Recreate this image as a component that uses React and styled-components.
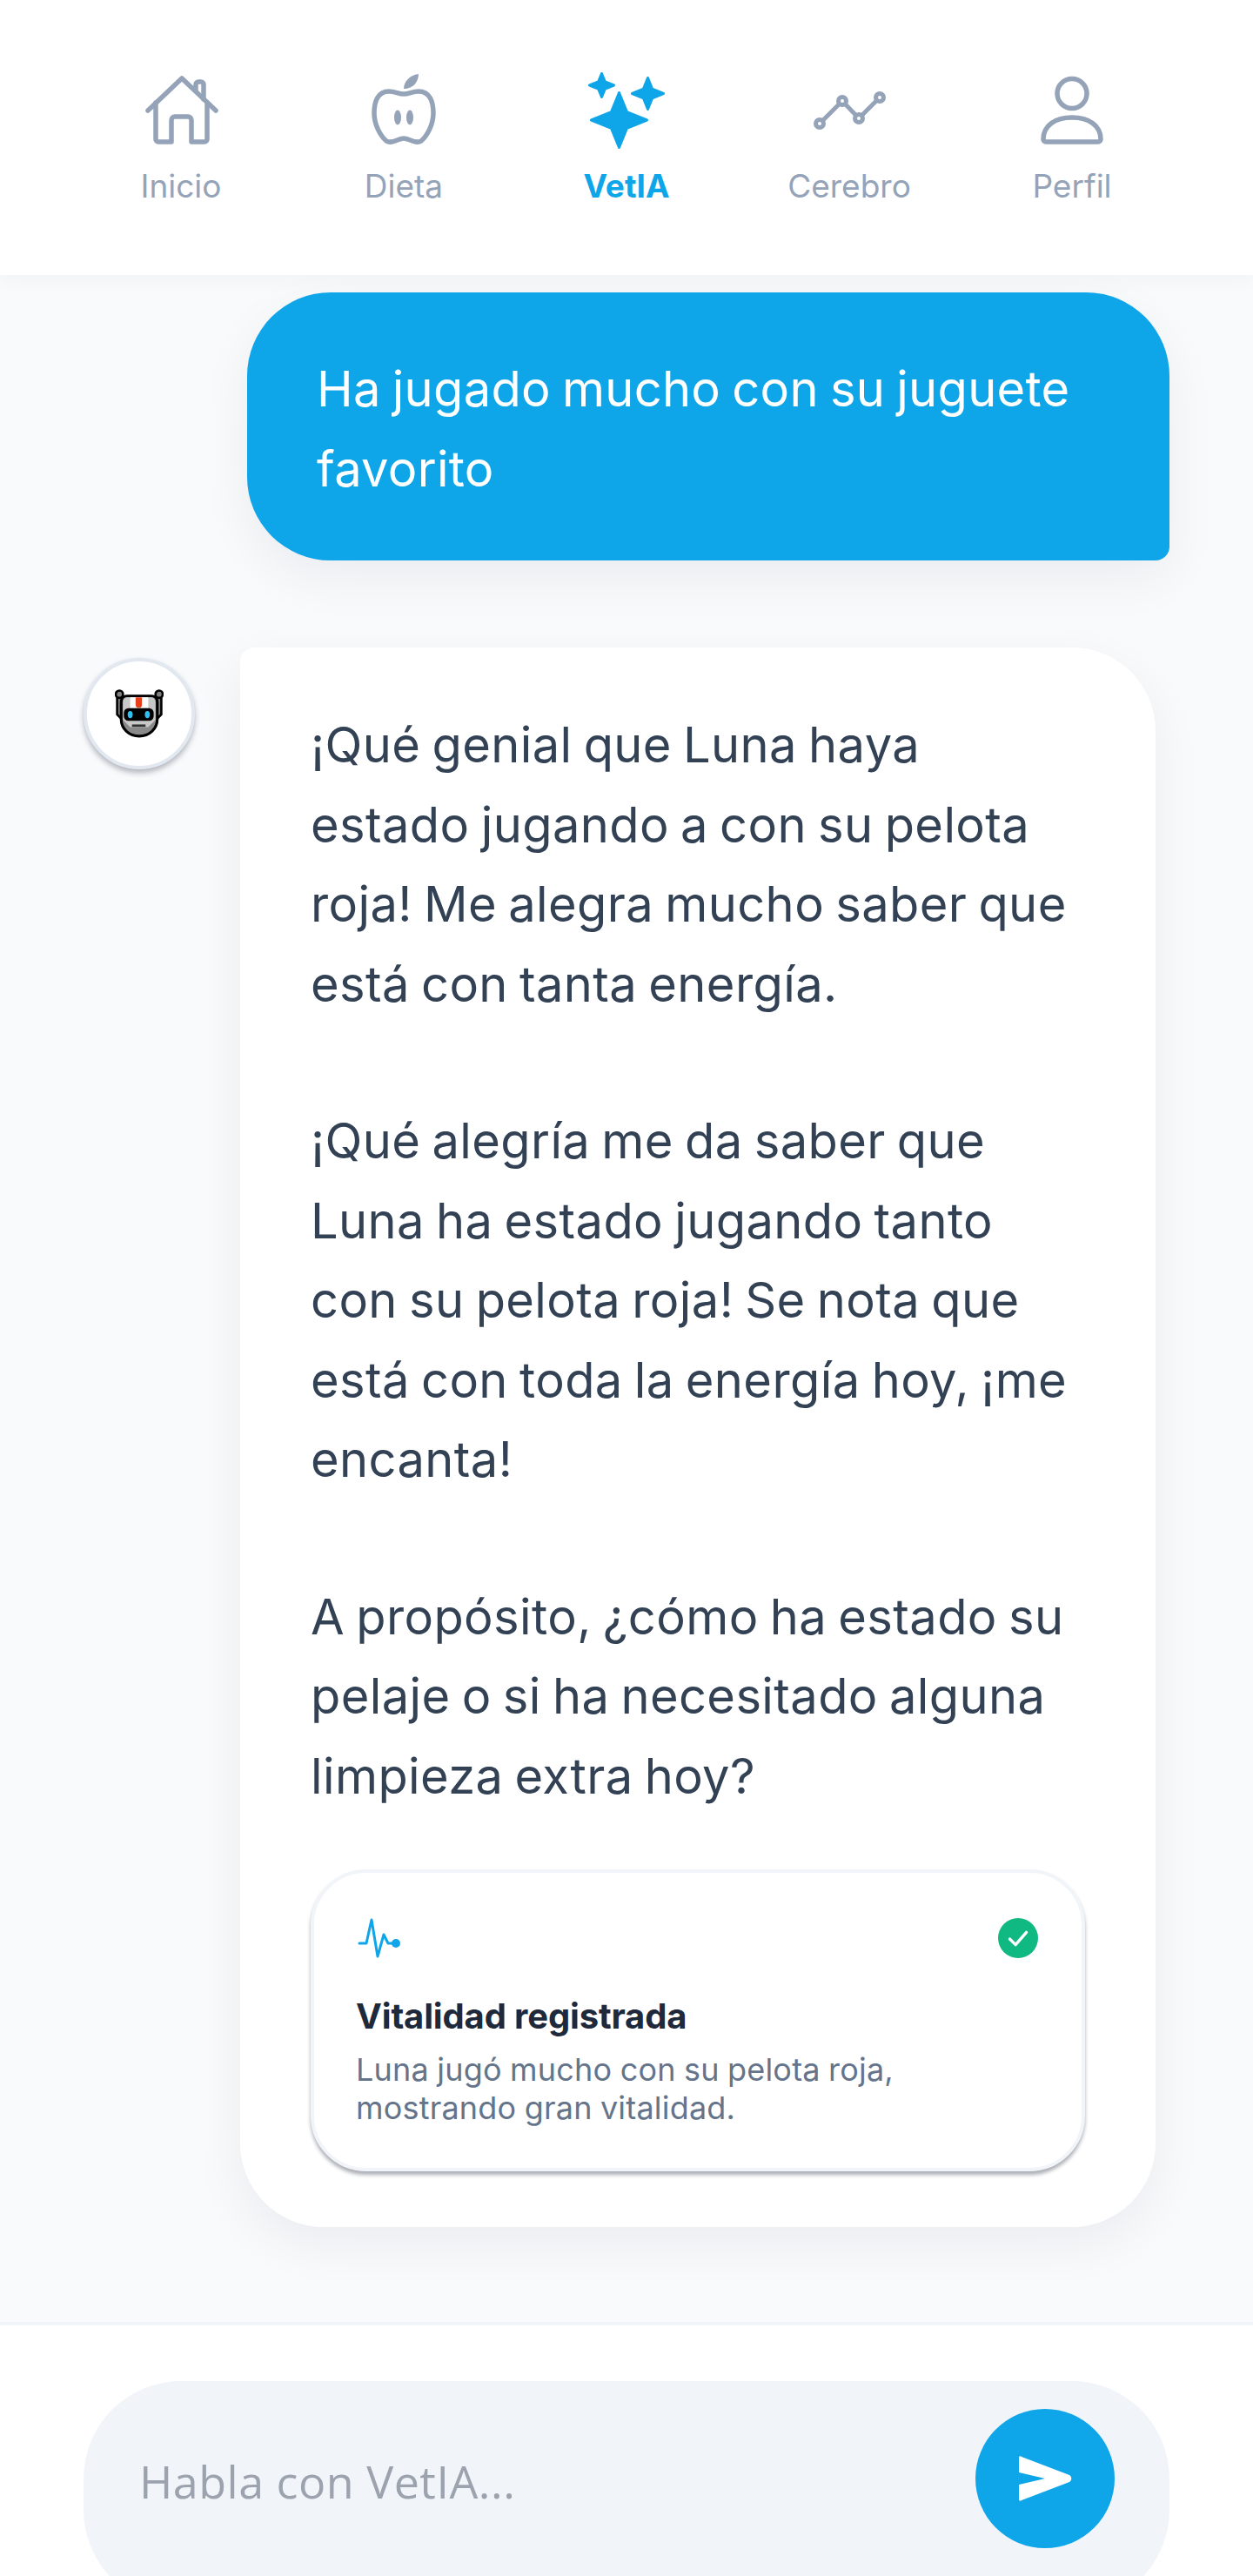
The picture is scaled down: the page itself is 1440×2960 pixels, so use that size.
import React from 'react';
import styled, { createGlobalStyle } from 'styled-components';

const Global = createGlobalStyle`
  html, body { margin: 0; padding: 0; background: #f8fafc; }
  * { box-sizing: border-box; }
`;

const Page = styled.div`
  width: 1440px;
  height: 2960px;
  display: flex;
  flex-direction: column;
  overflow: hidden;
  background: #f9fafc;
  font-family: Inter, "Liberation Sans", sans-serif;
`;

const Header = styled.header`
  height: 316px;
  flex: none;
  background: #fff;
  box-shadow: 0 4px 24px rgba(15, 23, 42, 0.04);
  display: grid;
  grid-template-columns: repeat(5, 256px);
  justify-content: center;
  padding-top: 80px;
  position: relative;
  z-index: 1;
`;

const NavItem = styled.div`
  display: flex;
  flex-direction: column;
  align-items: center;
  color: ${p => (p.$active ? '#0ea5e9' : '#94a3b8')};
`;

const NavIcon = styled.svg`
  width: 96px;
  height: 96px;
  display: block;
`;

const NavLabel = styled.span`
  margin-top: 14px;
  font-size: 37px;
  line-height: 48px;
  letter-spacing: 0;
  font-weight: ${p => (p.$active ? 700 : 400)};
`;

const Chat = styled.main`
  flex: 1;
  min-height: 0;
  padding: 20px 96px 0;
  display: flex;
  flex-direction: column;
  overflow: hidden;
`;

const UserBubble = styled.div`
  align-self: flex-end;
  width: 1060px;
  height: 308px;
  padding: 65px 80px 0;
  background: #0ea5e9;
  color: #fff;
  font-size: 56px;
  line-height: 92px;
  letter-spacing: 0.3px;
  word-spacing: -3px;
  border-radius: 96px 96px 16px 96px;
  box-shadow: 0 20px 60px rgba(15, 23, 42, 0.06);
`;

const BotRow = styled.div`
  margin-top: 100px;
  display: flex;
  align-items: flex-start;
`;

const Avatar = styled.div`
  width: 128px;
  height: 128px;
  margin-top: 12px;
  flex: none;
  border-radius: 50%;
  background: #fff;
  border: 4px solid #e2e8f0;
  display: flex;
  align-items: center;
  justify-content: center;
  box-shadow: 0 4px 6px rgba(15, 23, 42, 0.3);
`;

const BotBubble = styled.div`
  margin-left: 52px;
  width: 1052px;
  height: 1815px;
  padding: 67px 80px 0 81px;
  background: #fff;
  color: #334155;
  border-radius: 16px 96px 96px 96px;
  box-shadow: 0 20px 60px rgba(15, 23, 42, 0.06);
`;

const Para = styled.p`
  margin: 0 0 89px;
  font-size: 56px;
  line-height: 91.5px;
  letter-spacing: 0.4px;
  word-spacing: -3px;

  &:last-of-type {
    margin-bottom: 61px;
  }
`;

const Card = styled.div`
  width: 890px;
  height: 347px;
  padding: 52px 50px 0 48px;
  background: #fff;
  border: 4px solid #f1f5f9;
  border-radius: 64px;
  box-shadow: 0 4px 4px rgba(15, 23, 42, 0.35);
`;

const CardTop = styled.div`
  display: flex;
  justify-content: space-between;
  align-items: flex-start;
  height: 85px;
`;

const CardTitle = styled.div`
  font-size: 40px;
  line-height: 56px;
  font-weight: 700;
  letter-spacing: -0.15px;
  color: #1e293b;
`;

const CardText = styled.div`
  margin-top: 11px;
  font-size: 36px;
  line-height: 44px;
  letter-spacing: 0.2px;
  word-spacing: -1px;
  color: #64748b;
`;

const Footer = styled.footer`
  height: 292px;
  flex: none;
  background: #fff;
  border-top: 4px solid #f1f5f9;
  padding: 64px 96px 0;
`;

const InputPill = styled.div`
  height: 260px;
  border-radius: 112px;
  background: #f1f5f9;
  display: flex;
  justify-content: space-between;
  align-items: flex-start;
  padding: 32px 63px 0 64px;
`;

const Placeholder = styled.span`
  margin-top: 51px;
  font-family: "Open Sans", sans-serif;
  font-size: 52px;
  line-height: 64px;
  letter-spacing: 0.5px;
  color: #9ca3af;
`;

const SendButton = styled.div`
  width: 160px;
  height: 160px;
  border-radius: 50%;
  background: #0ea5e9;
  display: flex;
  align-items: center;
  justify-content: center;
`;

const HomeIcon = () => (
  <NavIcon viewBox="0 0 96 96" fill="none" stroke="currentColor" strokeWidth="5.5" strokeLinecap="round" strokeLinejoin="round">
    <path d="M10 47 49 10l39 37" />
    <path d="M19 38v42a3 3 0 0 0 3 3h15V58a4 4 0 0 1 4-4h15a4 4 0 0 1 4 4v25h15a3 3 0 0 0 3-3V38" />
    <path d="M65 23v-6a3 3 0 0 1 3-3h3a3 3 0 0 1 3 3v17" />
  </NavIcon>
);

const AppleIcon = () => (
  <NavIcon viewBox="0 0 96 96">
    <path fill="none" stroke="currentColor" strokeWidth="5.5" d="M31 25c7 0 11 3 17 3s10-3 17-3c13 0 17 12 17 25 0 13-7 26-14 32-6 4-14-3-20-3s-14 7-20 3C21 76 14 63 14 50c0-13 4-25 17-25z" />
    <path fill="currentColor" d="M48 22c0-8 7-16 17-17 0 9-6 17-17 17z" />
    <ellipse cx="41" cy="55" rx="4" ry="8.5" fill="currentColor" />
    <ellipse cx="55" cy="55" rx="4" ry="8.5" fill="currentColor" />
  </NavIcon>
);

// four point star, the stroke rounds its tips
const star = (cx, cy, rx, ry) => {
  const wx = rx * 0.28;
  const wy = ry * 0.3;
  return `M${cx} ${cy - ry}L${cx + wx} ${cy - wy}L${cx + rx} ${cy}L${cx + wx} ${cy + wy}L${cx} ${cy + ry}L${cx - wx} ${cy + wy}L${cx - rx} ${cy}L${cx - wx} ${cy - wy}Z`;
};

const SparkIcon = () => (
  <NavIcon viewBox="0 0 96 96" fill="currentColor" stroke="currentColor" strokeWidth="3" strokeLinejoin="round">
    <path d={star(39.5, 58, 32, 31.5)} />
    <path d={star(19.5, 18, 14, 13.5)} />
    <path d={star(72.5, 27.5, 18, 18)} />
  </NavIcon>
);

const TrendIcon = () => (
  <NavIcon viewBox="0 0 96 96" fill="none" stroke="currentColor" strokeWidth="5">
    <path d="M14 62 40 36l19 20 24-24" strokeLinecap="round" />
    <circle cx="14" cy="62" r="4.5" fill="#fff" />
    <circle cx="40" cy="36" r="4.5" fill="#fff" />
    <circle cx="59" cy="56" r="4.5" fill="#fff" />
    <circle cx="83" cy="32" r="4.5" fill="#fff" />
  </NavIcon>
);

const UserIcon = () => (
  <NavIcon viewBox="0 0 96 96" fill="none" stroke="currentColor" strokeWidth="5.5" strokeLinejoin="round">
    <circle cx="48" cy="27.5" r="17" />
    <path d="M15 80c0-16 14-25 33-25s33 9 33 25a3 3 0 0 1-3 3H18a3 3 0 0 1-3-3z" />
  </NavIcon>
);

const RobotFace = () => (
  <svg width="56" height="56" viewBox="0 0 54 54">
    <path d="M2.5 6v22l6 6V6z" fill="#808080" stroke="#000" strokeWidth="2.5" />
    <path d="M51.5 6v22l-6 6V6z" fill="#808080" stroke="#000" strokeWidth="2.5" />
    <circle cx="5" cy="5.5" r="4" fill="#808080" stroke="#000" strokeWidth="2.5" />
    <circle cx="49" cy="5.5" r="4" fill="#808080" stroke="#000" strokeWidth="2.5" />
    <path d="M13 7.5h28c4 0 6 3 6 7V33c0 11-9 19-20 19S7 44 7 33V14.5c0-4 2-7 6-7z" fill="#8a8a8a" stroke="#000" strokeWidth="3" />
    <path d="M14 9h26c3 0 5 2 5 6v19l-8 8H17l-8-8V15c0-4 2-6 5-6z" fill="#c8c8c8" />
    <path d="M17 9h20v12H17z" fill="#fff" />
    <path d="M23 9h7v8a3.5 3.5 0 0 1-7 0z" fill="#e8401c" />
    <rect x="10" y="21" width="33" height="14" rx="5" fill="#000" />
    <ellipse cx="17" cy="28" rx="2.8" ry="4" fill="#2cc1f5" />
    <ellipse cx="36" cy="28" rx="2.8" ry="4" fill="#2cc1f5" />
    <rect x="19" y="39" width="15" height="2.6" fill="#333" />
  </svg>
);

const PulseIcon = () => (
  <svg width="54" height="46" viewBox="0 0 54 46" fill="none">
    <path d="M4 29h8l6-27 7 42 7-25 5 10h9" stroke="#0ea5e9" strokeWidth="3" strokeLinecap="round" strokeLinejoin="round" />
    <circle cx="46" cy="29" r="5" fill="#0ea5e9" />
  </svg>
);

const CheckBadge = () => (
  <svg width="46" height="46" viewBox="0 0 48 48">
    <circle cx="24" cy="24" r="24" fill="#10b981" />
    <path d="M14 25l7 7 13-15" fill="none" stroke="#fff" strokeWidth="3.5" strokeLinecap="round" strokeLinejoin="round" />
  </svg>
);

const SendIcon = () => (
  <svg width="62" height="52" viewBox="0 0 62 52">
    <path d="M1 2c0-2 2-2 3-1l55 21c3 2 3 6 0 8L4 51c-1 1-3 1-3-1V33l30-7L1 19z" fill="#fff" />
  </svg>
);

const navItems = [
  { label: 'Inicio', Icon: HomeIcon },
  { label: 'Dieta', Icon: AppleIcon },
  { label: 'VetIA', Icon: SparkIcon, active: true },
  { label: 'Cerebro', Icon: TrendIcon },
  { label: 'Perfil', Icon: UserIcon },
];

const paragraphs = [
  ['¡Qué genial que Luna haya', 'estado jugando a con su pelota', 'roja! Me alegra mucho saber que', 'está con tanta energía.'],
  ['¡Qué alegría me da saber que', 'Luna ha estado jugando tanto', 'con su pelota roja! Se nota que', 'está con toda la energía hoy, ¡me', 'encanta!'],
  ['A propósito, ¿cómo ha estado su', 'pelaje o si ha necesitado alguna', 'limpieza extra hoy?'],
];

export default function App() {
  return (
    <Page>
      <Global />
      <Header>
        {navItems.map(({ label, Icon, active }) => (
          <NavItem key={label} $active={active}>
            <Icon />
            <NavLabel $active={active}>{label}</NavLabel>
          </NavItem>
        ))}
      </Header>
      <Chat>
        <UserBubble>Ha jugado mucho con su juguete<br />favorito</UserBubble>
        <BotRow>
          <Avatar><RobotFace /></Avatar>
          <BotBubble>
            {paragraphs.map((lines, i) => (
              <Para key={i}>
                {lines.map((line, j) => (
                  <React.Fragment key={j}>{line}{j < lines.length - 1 && <br />}</React.Fragment>
                ))}
              </Para>
            ))}
            <Card>
              <CardTop>
                <PulseIcon />
                <CheckBadge />
              </CardTop>
              <CardTitle>Vitalidad registrada</CardTitle>
              <CardText>Luna jugó mucho con su pelota roja,<br />mostrando gran vitalidad.</CardText>
            </Card>
          </BotBubble>
        </BotRow>
      </Chat>
      <Footer>
        <InputPill>
          <Placeholder>Habla con VetIA...</Placeholder>
          <SendButton><SendIcon /></SendButton>
        </InputPill>
      </Footer>
    </Page>
  );
}
